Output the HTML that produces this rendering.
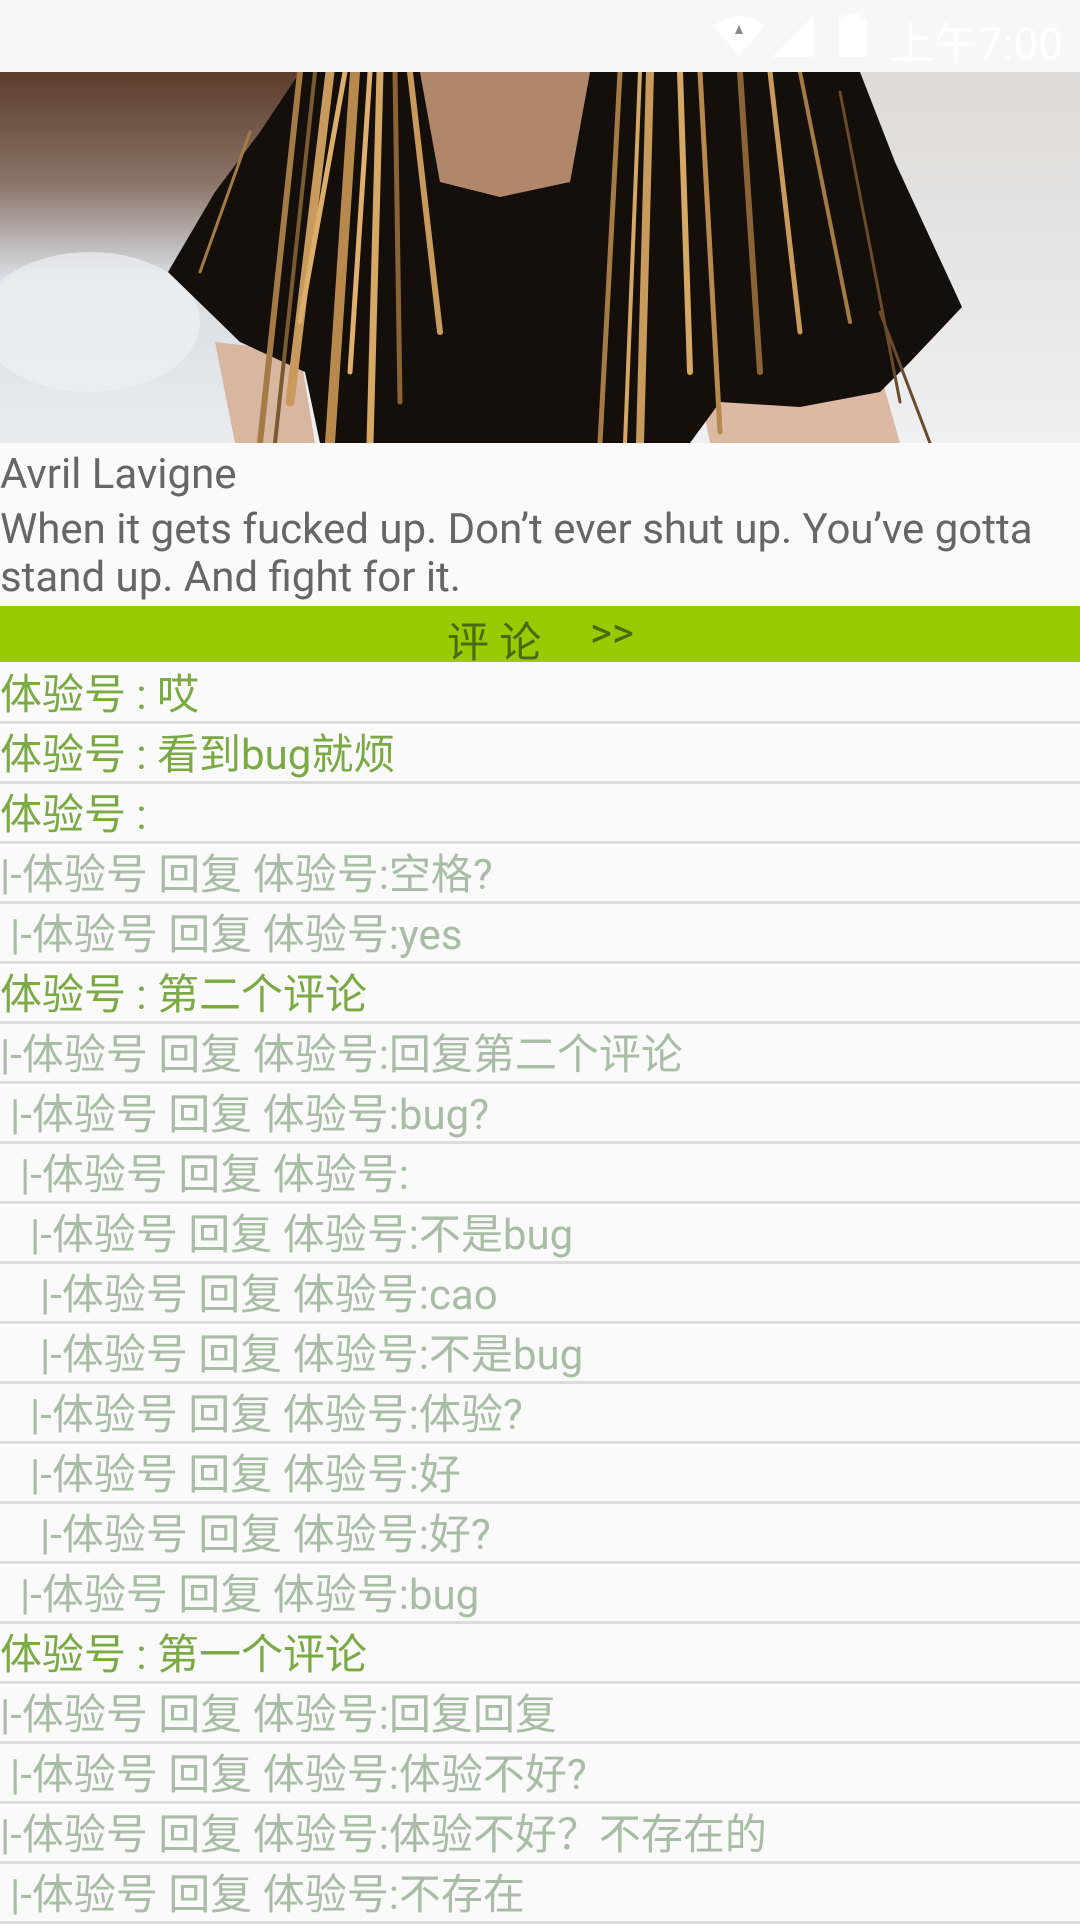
<!DOCTYPE html>
<html><head><meta charset="utf-8">
<style>
*{margin:0;padding:0;box-sizing:border-box}
body{width:1080px;height:1920px;overflow:hidden;background:#fafafa;font-family:"Roboto","Liberation Sans","Noto Sans CJK SC",sans-serif}
.status{position:absolute;left:0;top:0;width:1080px;height:72px;background:#f7f7f7}
.time{position:absolute;left:890px;top:8px;font-size:44px;color:#fff;font-family:"Roboto","Liberation Sans","Noto Sans CJK SC",sans-serif}
.img{position:absolute;left:0;top:72px;width:1080px;height:371px;overflow:hidden}
.name{position:absolute;left:0;top:450px;font-size:42px;color:#666;white-space:nowrap}
.q{position:absolute;left:0;font-size:42px;color:#666;white-space:nowrap}
.bar{position:absolute;left:0;top:606px;width:1080px;height:56px;background:#99cc00}
.bar span{position:absolute;top:3px;font-size:42px;color:#4a6a10}
.rows{position:absolute;left:0;top:664px;width:1080px}
.r{height:60px;border-bottom:3px solid #dcdcdc;font-size:42px;line-height:57px;padding-top:3px;white-space:nowrap;overflow:hidden}
.g{color:#7ba944}
.s{color:#a9bca6}
</style></head><body>
<div class="status">
<svg width="1080" height="72" style="position:absolute;left:0;top:0">
<path d="M713,26 Q739,6 765,26 L739,56 Z" fill="#fff"/>
<path d="M735,34 L739,25 L743,34 Z" fill="#888"/>
<path d="M772,57 L814,15 L814,57 Z" fill="#fff"/>
<rect x="845" y="14" width="16" height="5" fill="#fff"/>
<rect x="839" y="18" width="28" height="39" fill="#fff"/>
</svg>
<div class="time">上午7:00</div>
</div>
<div class="img">
<svg width="1080" height="371" viewBox="0 0 1080 371">
<defs>
<linearGradient id="bl" x1="0" y1="0" x2="0" y2="1">
<stop offset="0" stop-color="#5c3d2c"/><stop offset=".3" stop-color="#8a7468"/><stop offset=".55" stop-color="#d8dde3"/><stop offset="1" stop-color="#e9ecef"/></linearGradient>
<linearGradient id="br" x1="0" y1="0" x2="0" y2="1">
<stop offset="0" stop-color="#dedad6"/><stop offset="1" stop-color="#eef0f2"/></linearGradient>
</defs>
<rect width="1080" height="371" fill="url(#br)"/>
<rect width="300" height="371" fill="url(#bl)"/>
<ellipse cx="90" cy="250" rx="110" ry="70" fill="#eef1f4" opacity=".7"/>
<path d="M420,0 L590,0 L570,110 L500,130 L440,110 Z" fill="#b0876a"/>
<path d="M215,270 L300,280 L315,371 L235,371 Z" fill="#d8b6a0"/>
<path d="M700,320 L880,300 L900,371 L710,371 Z" fill="#dcb9a3"/>
<path d="M300,0 L420,0 L440,110 L500,125 L570,110 L590,0 L860,0 L895,90 L962,235 L910,290 L880,320 L800,335 L720,330 L690,371 L320,371 L305,300 L240,270 L168,200 L215,120 L260,60 Z" fill="#150f0c"/>
<g fill="none" stroke-linecap="round">
<path d="M300,0 L260,371" stroke="#a57b45" stroke-width="6"/>
<path d="M315,0 L275,371" stroke="#7a5a30" stroke-width="4"/>
<path d="M330,0 L290,330" stroke="#c89a5c" stroke-width="9"/>
<path d="M355,0 L330,371" stroke="#b8894d" stroke-width="10"/>
<path d="M370,0 L350,300" stroke="#e0b070" stroke-width="5"/>
<path d="M380,0 L370,371" stroke="#d6a865" stroke-width="7"/>
<path d="M395,0 L400,330" stroke="#8a6435" stroke-width="5"/>
<path d="M410,0 L440,260" stroke="#c89a5c" stroke-width="6"/>
<path d="M345,0 L300,250" stroke="#dcae6c" stroke-width="5"/>
<path d="M250,60 L200,200" stroke="#a57b45" stroke-width="3"/>
<path d="M620,0 L600,371" stroke="#a57b45" stroke-width="5"/>
<path d="M640,0 L625,371" stroke="#d6a865" stroke-width="4"/>
<path d="M650,0 L640,371" stroke="#c89a5c" stroke-width="8"/>
<path d="M680,0 L690,300" stroke="#d6a865" stroke-width="6"/>
<path d="M700,0 L720,360" stroke="#b8894d" stroke-width="5"/>
<path d="M740,0 L760,300" stroke="#8a6435" stroke-width="6"/>
<path d="M770,0 L800,260" stroke="#c89a5c" stroke-width="5"/>
<path d="M800,0 L850,250" stroke="#a57b45" stroke-width="4"/>
<path d="M840,20 L900,330" stroke="#6b4c2a" stroke-width="3"/>
<path d="M880,240 L930,371" stroke="#6b4c2a" stroke-width="3"/>
</g>
</svg>
</div>
<div class="name">Avril Lavigne</div>
<div class="q" style="top:505px">When it gets fucked up. Don’t ever shut up. You’ve gotta</div>
<div class="q" style="top:553px">stand up. And fight for it.</div>
<div class="bar"><span style="left:447px">评 论</span><span style="left:590px">&gt;&gt;</span></div>
<div class="rows">
<div class="r g">体验号 : 哎</div>
<div class="r g">体验号 : 看到bug就烦</div>
<div class="r g">体验号 :</div>
<div class="r s">|-体验号 回复 体验号:空格?</div>
<div class="r s" style="padding-left:10px">|-体验号 回复 体验号:yes</div>
<div class="r g">体验号 : 第二个评论</div>
<div class="r s">|-体验号 回复 体验号:回复第二个评论</div>
<div class="r s" style="padding-left:10px">|-体验号 回复 体验号:bug?</div>
<div class="r s" style="padding-left:20px">|-体验号 回复 体验号:</div>
<div class="r s" style="padding-left:30px">|-体验号 回复 体验号:不是bug</div>
<div class="r s" style="padding-left:40px">|-体验号 回复 体验号:cao</div>
<div class="r s" style="padding-left:40px">|-体验号 回复 体验号:不是bug</div>
<div class="r s" style="padding-left:30px">|-体验号 回复 体验号:体验?</div>
<div class="r s" style="padding-left:30px">|-体验号 回复 体验号:好</div>
<div class="r s" style="padding-left:40px">|-体验号 回复 体验号:好?</div>
<div class="r s" style="padding-left:20px">|-体验号 回复 体验号:bug</div>
<div class="r g">体验号 : 第一个评论</div>
<div class="r s">|-体验号 回复 体验号:回复回复</div>
<div class="r s" style="padding-left:10px">|-体验号 回复 体验号:体验不好?</div>
<div class="r s">|-体验号 回复 体验号:体验不好？不存在的</div>
<div class="r s" style="padding-left:10px">|-体验号 回复 体验号:不存在</div>
</div>
</body></html>
